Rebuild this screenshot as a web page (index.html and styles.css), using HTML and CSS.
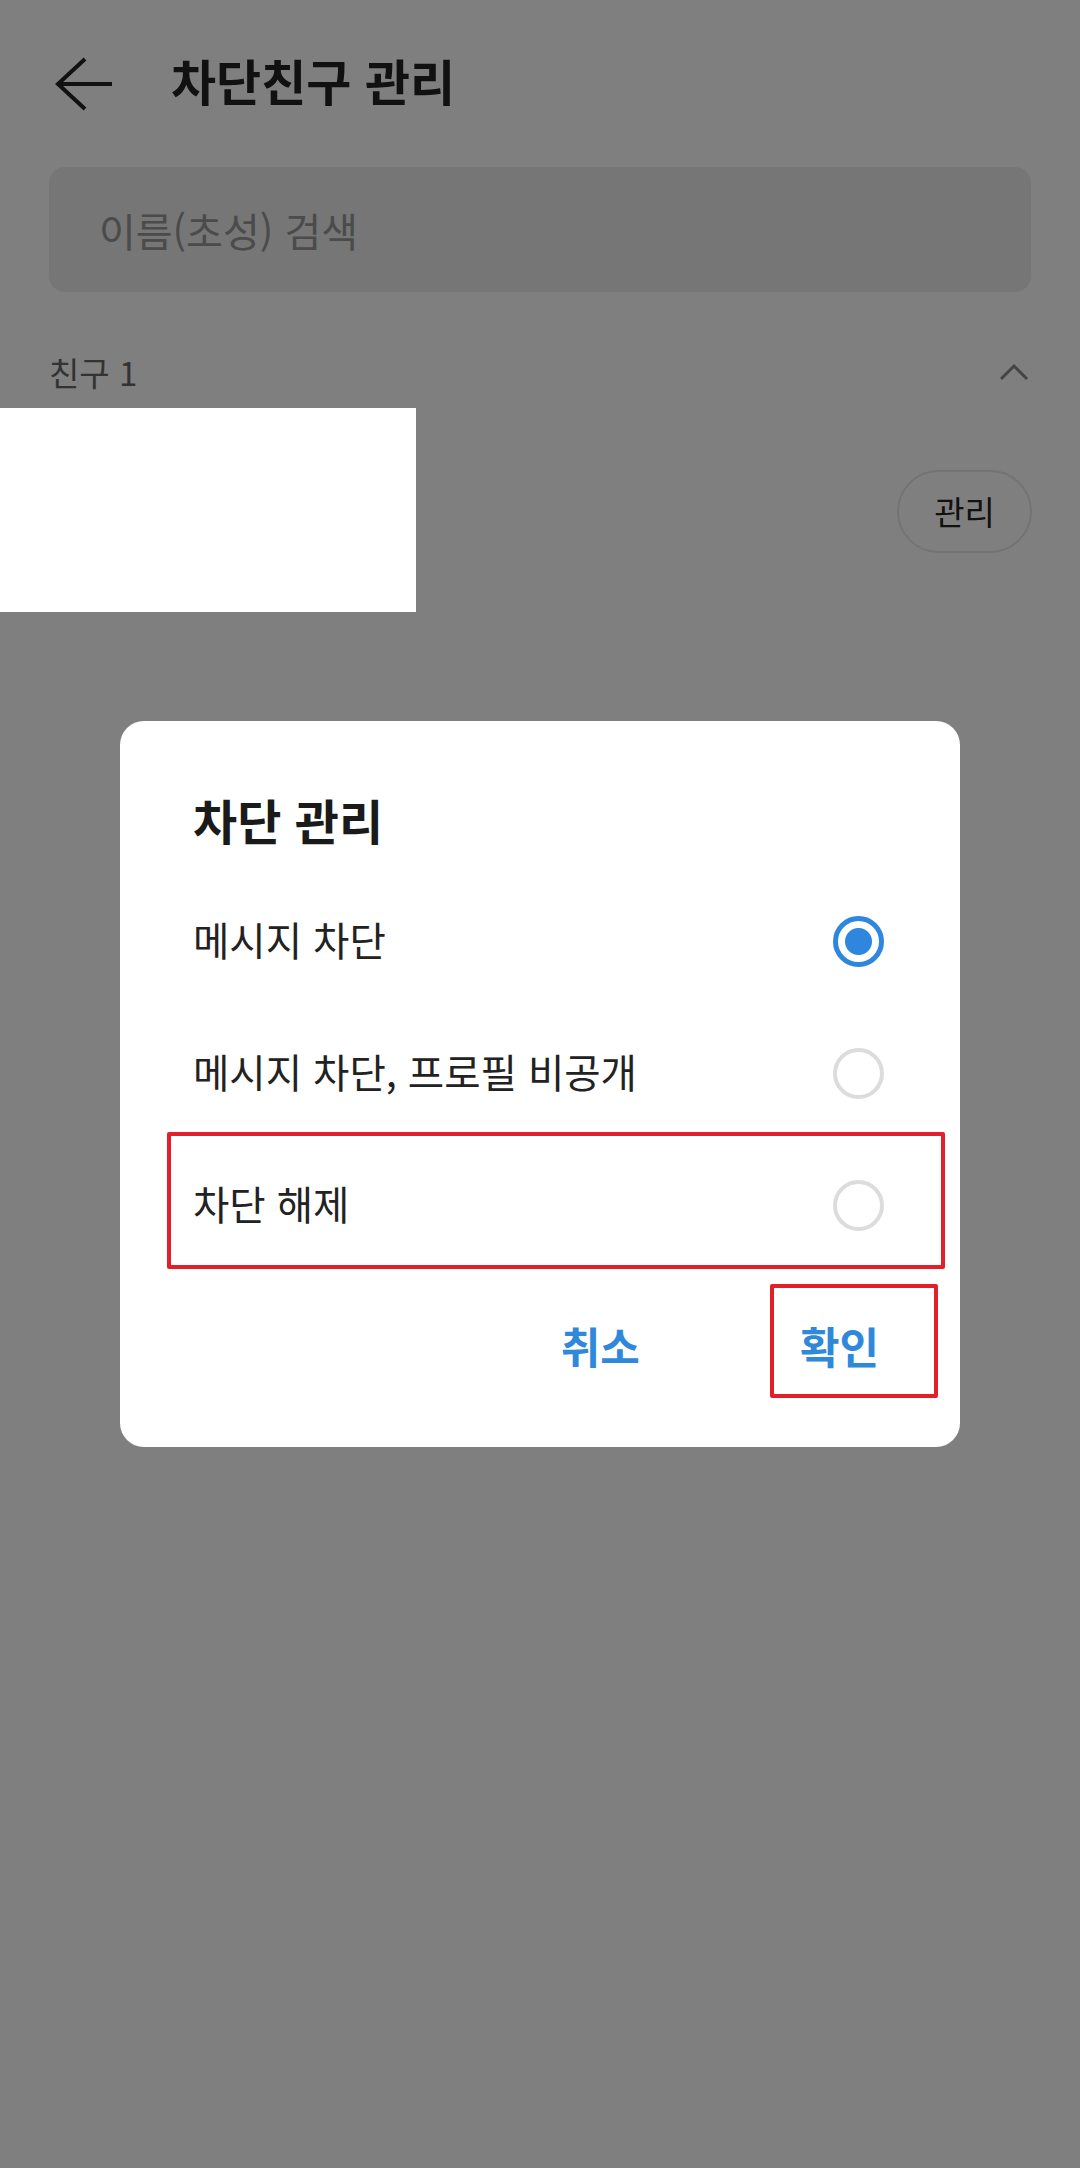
FILE: index.html
```html
<!DOCTYPE html>
<html lang="ko">
<head>
    <meta charset="UTF-8">
    <meta name="viewport" content="width=device-width, initial-scale=1.0">
    <title>차단친구 관리</title>
    <link rel="stylesheet" href="styles.css">
</head>
<body>

    <div class="screen">
        <div class="topbar">
            <button class="back-btn">
                <svg width="60" height="54" viewBox="0 0 60 54">
                    <path d="M58 27 H4 M31 2 L4 27 L31 52" fill="none" stroke="#222" stroke-width="4"/>
                </svg>
            </button>
            <h1>차단친구 관리</h1>
        </div>

        <div class="search">이름(초성) 검색</div>

        <div class="group-head">
            <span>친구 1</span>
            <svg width="30" height="18" viewBox="0 0 30 18">
                <path d="M2 16 L15 3 L28 16" fill="none" stroke="#888" stroke-width="3"/>
            </svg>
        </div>

        <div class="friend">
            <div class="friend-info"></div>
            <button class="manage-btn">관리</button>
        </div>
    </div>

    <!-- 가림 처리 -->
    <div class="redact"></div>

    <div class="dim">
        <div class="dialog">
            <h2>차단 관리</h2>
            <ul class="options">
                <li><span>메시지 차단</span><span class="radio on"></span></li>
                <li><span>메시지 차단, 프로필 비공개</span><span class="radio"></span></li>
                <li><span>차단 해제</span><span class="radio"></span></li>
            </ul>
            <div class="actions">
                <button>취소</button>
                <button>확인</button>
            </div>

            <!-- 표시 박스 -->
            <div class="mark mark-row"></div>
            <div class="mark mark-ok"></div>
        </div>
    </div>

</body>
</html>
```

FILE: styles.css
```css
body {
    font-family: "Noto Sans CJK KR", "Noto Sans", sans-serif;
    background-color: white;
    margin: 0;
    padding: 0;
    width: 1080px;
    height: 2168px;
    overflow: hidden;
}
button {
    font-family: inherit;
    background: none;
    border: none;
    padding: 0;
    cursor: pointer;
}
.topbar {
    height: 167px;
    display: flex;
    align-items: center;
    padding-left: 54px;
}
.back-btn {
    display: flex;
}
.topbar h1 {
    margin: 0 0 8px 57px;
    font-size: 49px;
    font-weight: bold;
    color: #222;
}
.search {
    margin: 0 49px;
    height: 125px;
    border-radius: 16px;
    background-color: #ececec;
    display: flex;
    align-items: center;
    padding-left: 50px;
    font-size: 40px;
    color: #979797;
}
.group-head {
    height: 160px;
    display: flex;
    align-items: center;
    justify-content: space-between;
    padding: 0 51px 0 49px;
    font-size: 33px;
    color: #666;
}
.friend {
    height: 118px;
    display: flex;
    align-items: center;
    justify-content: space-between;
    padding-right: 48px;
}
.manage-btn {
    width: 135px;
    height: 83px;
    border: 2px solid #e6e6e6;
    border-radius: 42px;
    font-size: 33px;
    color: #222;
}
.redact {
    position: absolute;
    top: 408px;
    left: 0;
    width: 416px;
    height: 204px;
    background-color: white;
    z-index: 20;
}
.dim {
    position: fixed;
    top: 0;
    left: 0;
    right: 0;
    bottom: 0;
    background-color: rgba(0,0,0,0.5);
    display: flex;
    align-items: center;
    justify-content: center;
    z-index: 10;
}
.dialog {
    position: relative;
    width: 840px;
    box-sizing: border-box;
    padding: 68px 76px 47px 73px;
    background-color: white;
    border-radius: 24px;
}
.dialog h2 {
    margin: 0 0 23px;
    line-height: 60px;
    font-size: 48px;
    font-weight: bold;
    color: #1a1a1a;
}
.options {
    list-style: none;
    margin: 0;
    padding: 0;
}
.options li {
    height: 132px;
    display: flex;
    align-items: center;
    justify-content: space-between;
    font-size: 39.5px;
    color: #222;
}
.radio {
    width: 51px;
    height: 51px;
    margin-top: 6px;
    box-sizing: border-box;
    border: 4px solid #dcdcdc;
    border-radius: 50%;
}
.radio.on {
    border: 5px solid #2e86de;
    background: radial-gradient(circle, #2e86de 13px, white 14px);
}
.actions {
    margin-top: 22px;
    height: 110px;
    display: flex;
    align-items: center;
    justify-content: flex-end;
    gap: 160px;
    padding-right: 5px;
}
.actions button {
    font-size: 43px;
    font-weight: bold;
    color: #3088da;
}
.mark {
    position: absolute;
    border: 4px solid #e3202a;
    border-radius: 2px;
}
.mark-row {
    left: 47px;
    top: 411px;
    width: 770px;
    height: 129px;
}
.mark-ok {
    left: 650px;
    top: 563px;
    width: 160px;
    height: 106px;
}
```
